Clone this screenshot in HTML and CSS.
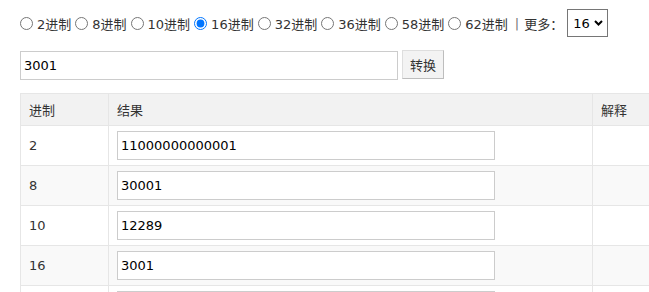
FILE: index.html
```html
<!DOCTYPE html>
<html lang="zh">
<head>
<meta charset="utf-8">
<title>进制转换</title>
<link rel="stylesheet" href="styles.css">
</head>
<body>
<div class="bar">
  <label class="opt"><input type="radio" name="base">2进制</label>
  <label class="opt"><input type="radio" name="base">8进制</label>
  <label class="opt"><input type="radio" name="base">10进制</label>
  <label class="opt"><input type="radio" name="base" checked>16进制</label>
  <label class="opt"><input type="radio" name="base">32进制</label>
  <label class="opt"><input type="radio" name="base">36进制</label>
  <label class="opt"><input type="radio" name="base">58进制</label>
  <label class="opt"><input type="radio" name="base">62进制</label>
  <span class="sep">|</span>
  <span class="more">更多：</span>
  <span class="selwrap">
    <select class="sel"><option>16</option></select>
    <svg class="chev" width="9" height="6" viewBox="0 0 9 6"><path d="M1 1 L4.5 4.5 L8 1" fill="none" stroke="#000" stroke-width="2"/></svg>
  </span>
</div>
<div class="form">
  <input class="txt" type="text" value="3001">
  <button class="btn">转换</button>
</div>
<table class="tbl">
  <colgroup><col class="c1"><col class="c2"><col class="c3"></colgroup>
  <thead>
    <tr><th>进制</th><th>结果</th><th>解释</th></tr>
  </thead>
  <tbody>
    <tr><td>2</td><td><input class="txt" type="text" value="11000000000001"></td><td></td></tr>
    <tr><td>8</td><td><input class="txt" type="text" value="30001"></td><td></td></tr>
    <tr><td>10</td><td><input class="txt" type="text" value="12289"></td><td></td></tr>
    <tr><td>16</td><td><input class="txt" type="text" value="3001"></td><td></td></tr>
    <tr class="last"><td></td><td><input class="txt" type="text" value=""></td><td></td></tr>
  </tbody>
</table>
</body>
</html>
```
FILE: styles.css
```css
html, body {
  margin: 0;
  overflow: hidden;
}
body {
  padding: 9px 20px 0 20px;
  font-family: "DejaVu Sans", Verdana, "Noto Sans CJK SC", sans-serif;
  font-size: 13px;
  color: #333;
  width: 800px;
}
.bar {
  display: flex;
  align-items: center;
  height: 28px;
  white-space: nowrap;
}
.opt {
  display: flex;
  align-items: center;
  margin-right: 4px;
}
.opt input {
  width: 13px;
  height: 13px;
  margin: 1px 4px 0 0;
}
.sep {
  margin: 0 5px 0 3px;
  color: #777;
}
.more {
  font-family: "Noto Sans CJK SC", sans-serif;
  margin-right: 4px;
}
.selwrap {
  position: relative;
  display: block;
  width: 41px;
  height: 28px;
}
.sel {
  -webkit-appearance: none;
  appearance: none;
  box-sizing: border-box;
  display: block;
  width: 41px;
  height: 28px;
  font-family: "DejaVu Sans", Verdana, sans-serif;
  font-size: 13px;
  color: #000;
  border: 1px solid #767676;
  border-radius: 0;
  background: #fff;
  padding: 0 0 0 5px;
  margin: 0;
}
.chev {
  position: absolute;
  right: 5px;
  top: 11px;
  pointer-events: none;
}
.form {
  display: flex;
  align-items: flex-start;
  margin-top: 14px;
}
.txt {
  box-sizing: border-box;
  width: 378px;
  height: 29px;
  border: 1px solid #ccc;
  padding: 0 3px;
  font-family: "DejaVu Sans", Verdana, sans-serif;
  font-size: 13px;
  color: #000;
  outline: none;
  margin: 0;
}
.btn {
  box-sizing: border-box;
  margin: -1px 0 0 4px;
  width: 42px;
  height: 29px;
  padding: 0;
  background: #f3f3f3;
  border: 1px solid #dedede;
  border-right-color: #bdbdbd;
  border-bottom-color: #bdbdbd;
  font-family: "Noto Sans CJK SC", sans-serif;
  font-size: 13px;
  color: #333;
}
.tbl {
  margin-top: 13px;
  border-collapse: collapse;
  table-layout: fixed;
  width: 720px;
}
.c1 { width: 88px; }
.c2 { width: 484px; }
.c3 { width: 148px; }
.tbl th, .tbl td {
  border: 1px solid #e6e6e6;
  padding: 5px 8px;
  text-align: left;
  vertical-align: middle;
}
.tbl th {
  background: #f2f2f2;
  font-weight: normal;
  line-height: 21px;
  font-family: "Noto Sans CJK SC", sans-serif;
  font-size: 13px;
  color: #333;
}
.tbl td {
  line-height: 29px;
}
.tbl tbody tr:nth-child(even) td {
  background: #f9f9f9;
}
.tbl td .txt {
  display: block;
}
```
